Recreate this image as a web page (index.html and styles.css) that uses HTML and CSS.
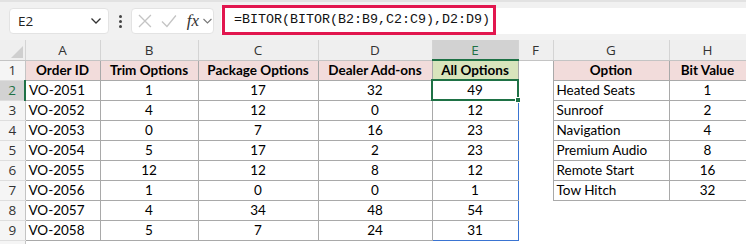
FILE: index.html
```html
<!DOCTYPE html>
<html lang="en">
  <head>
    <meta charset="UTF-8" />
    <title>BITOR - All Options</title>
    <link rel="stylesheet" href="styles.css">
  </head>
  <body>
    <div class="formula-bar">
      <div class="name-box">
        <span>E2</span>
        <svg class="chev" width="12" height="8" viewBox="0 0 12 8"><path d="M1.5 1.5 L6 6 L10.5 1.5" fill="none" stroke="#333" stroke-width="1.3"/></svg>
      </div>
      <div class="dots"><i></i><i></i><i></i></div>
      <div class="fx-box">
        <svg width="16" height="16" viewBox="0 0 16 16"><path d="M2 2 L14 14 M14 2 L2 14" stroke="#c4c4c4" stroke-width="1.3"/></svg>
        <svg width="18" height="16" viewBox="0 0 18 16"><path d="M2 8.5 L7 13.5 L16 2.5" fill="none" stroke="#c4c4c4" stroke-width="1.3"/></svg>
        <span class="fx">fx</span>
        <svg width="11" height="8" viewBox="0 0 11 8"><path d="M1.5 2 L5.5 6 L9.5 2" fill="none" stroke="#777" stroke-width="1.1"/></svg>
      </div>
      <div class="formula-input">
        <span class="formula">=BITOR(BITOR(B2:B9,C2:C9),D2:D9)</span>
      </div>
    </div>

    <div class="sheet">
      <table class="grid">
        <colgroup>
          <col style="width:25px"><col style="width:75px"><col style="width:98px">
          <col style="width:120px"><col style="width:114px"><col style="width:86px">
          <col style="width:35px"><col style="width:116px"><col style="width:77px">
        </colgroup>
        <thead>
          <tr>
            <th class="corner"><svg width="12" height="12" viewBox="0 0 12 12"><path d="M12 0 L12 12 L0 12 Z" fill="#cfcfcf"/></svg></th>
            <th>A</th><th>B</th><th>C</th><th>D</th><th class="sel-col">E</th><th>F</th><th>G</th><th>H</th>
          </tr>
        </thead>
        <tbody>
          <tr>
            <th class="rn">1</th>
            <td class="b hd">Order ID</td><td class="b hd">Trim Options</td><td class="b hd">Package Options</td>
            <td class="b hd">Dealer Add-ons</td><td class="b hd green">All Options</td><td></td>
            <td class="b hd">Option</td><td class="b hd">Bit Value</td>
          </tr>
          <tr>
            <th class="rn sel-row">2</th>
            <td class="b l">VO-2051</td><td class="b">1</td><td class="b">17</td><td class="b">32</td>
            <td class="b active">49<span class="handle"></span></td><td></td>
            <td class="b l">Heated Seats</td><td class="b">1</td>
          </tr>
          <tr>
            <th class="rn">3</th>
            <td class="b l">VO-2052</td><td class="b">4</td><td class="b">12</td><td class="b">0</td>
            <td class="b rng">12</td><td></td>
            <td class="b l">Sunroof</td><td class="b">2</td>
          </tr>
          <tr>
            <th class="rn">4</th>
            <td class="b l">VO-2053</td><td class="b">0</td><td class="b">7</td><td class="b">16</td>
            <td class="b rng">23</td><td></td>
            <td class="b l">Navigation</td><td class="b">4</td>
          </tr>
          <tr>
            <th class="rn">5</th>
            <td class="b l">VO-2054</td><td class="b">5</td><td class="b">17</td><td class="b">2</td>
            <td class="b rng">23</td><td></td>
            <td class="b l">Premium Audio</td><td class="b">8</td>
          </tr>
          <tr>
            <th class="rn">6</th>
            <td class="b l">VO-2055</td><td class="b">12</td><td class="b">12</td><td class="b">8</td>
            <td class="b rng">12</td><td></td>
            <td class="b l">Remote Start</td><td class="b">16</td>
          </tr>
          <tr>
            <th class="rn">7</th>
            <td class="b l">VO-2056</td><td class="b">1</td><td class="b">0</td><td class="b">0</td>
            <td class="b rng">1</td><td></td>
            <td class="b l">Tow Hitch</td><td class="b">32</td>
          </tr>
          <tr>
            <th class="rn">8</th>
            <td class="b l">VO-2057</td><td class="b">4</td><td class="b">34</td><td class="b">48</td>
            <td class="b rng">54</td><td></td><td></td><td></td>
          </tr>
          <tr>
            <th class="rn">9</th>
            <td class="b l">VO-2058</td><td class="b">5</td><td class="b">7</td><td class="b">24</td>
            <td class="b rng last">31</td><td></td><td></td><td></td>
          </tr>
          <tr>
            <th class="rn"></th>
            <td></td><td></td><td></td><td></td><td></td><td></td><td></td><td></td>
          </tr>
        </tbody>
      </table>
    </div>
  </body>
</html>
```

FILE: styles.css
```css
* {
  box-sizing: border-box;
}
body {
  margin: 0;
  width: 746px;
  height: 244px;
  overflow: hidden;
  background: #ffffff;
  font-family: Lato, "Open Sans", sans-serif;
  color: #000;
}

/* Formula bar */
.formula-bar {
  display: flex;
  align-items: center;
  height: 40px;
  background: #f1f1f1;
  border-top: 2px solid #e2e2e2;
  padding-left: 9px;
}
.name-box {
  display: flex;
  align-items: center;
  justify-content: space-between;
  width: 100px;
  height: 26px;
  padding: 0 6px 0 8px;
  background: #fff;
  border: 1px solid #e3e3e3;
  border-radius: 4px;
  font-family: "Open Sans", sans-serif;
  font-size: 13.5px;
  color: #222;
}
.dots {
  display: flex;
  flex-direction: column;
  gap: 2px;
  margin: 0 9px 0 10px;
}
.dots i {
  width: 3px;
  height: 3px;
  background: #444;
  border-radius: 50%;
}
.fx-box {
  display: flex;
  align-items: center;
  gap: 7px;
  width: 83px;
  height: 26px;
  padding-left: 5px;
  background: #fff;
  border: 1px solid #e3e3e3;
  border-radius: 4px;
}
.fx {
  font-family: "Liberation Serif", serif;
  font-style: italic;
  font-size: 17px;
  color: #333;
  margin-left: 2px;
  margin-right: -4px;
}
.formula-input {
  flex: 1;
  height: 26px;
  margin-left: 7px;
  background: #fff;
  position: relative;
}
.formula {
  position: absolute;
  left: 1px;
  top: -3px;
  width: 274px;
  height: 30px;
  padding: 3px 0 0 9px;
  border: 3px solid #e2174f;
  font-family: "Liberation Mono", monospace;
  font-size: 13.33px;
  line-height: 18px;
  color: #111;
}

/* Sheet grid */
.grid {
  border-collapse: collapse;
  table-layout: fixed;
  width: 746px;
  font-size: 13.5px;
}
.grid th {
  height: 20px;
  padding: 0;
  background: #efefef;
  border-right: 1px solid #d4d4d4;
  border-bottom: 1px solid #c4c4c4;
  font-family: "Open Sans", sans-serif;
  font-weight: normal;
  font-size: 13.5px;
  color: #333;
}
.grid th.corner {
  text-align: right;
  vertical-align: bottom;
  padding: 0 2px 2px 0;
}
.grid th.corner svg {
  display: block;
  margin-left: auto;
}
.grid th.sel-col {
  background: #d2d2d2;
  color: #1e7145;
  border-bottom: 2px solid #1e7145;
}
.grid th.rn {
  background: #f5f5f5;
  border-bottom: 1px solid #dedede;
  border-right: 1px solid #c4c4c4;
}
.grid th.sel-row {
  background: #d2d2d2;
  color: #1e7145;
  border-right: 2px solid #1e7145;
}
.grid td {
  height: 20px;
  padding: 0 3px;
  text-align: center;
  white-space: nowrap;
  line-height: 18px;
}
.grid td.b {
  border: 1px solid #a9a9a9;
}
.grid td.l {
  text-align: left;
}
.grid td.hd {
  background: #f2dcdb;
  font-weight: bold;
}
.grid td.green {
  background: #d8e4bc;
}
.grid td.active {
  position: relative;
  border: 2px solid #1e7145;
}
.handle {
  position: absolute;
  right: -4px;
  bottom: -4px;
  width: 6px;
  height: 6px;
  background: #1e7145;
  border: 1px solid #fff;
}
.grid td.rng {
  border-left: 1px solid #3a74d2;
  border-right: 1px solid #3a74d2;
}
.grid td.rng.last {
  border-bottom: 1px solid #3a74d2;
}
```
